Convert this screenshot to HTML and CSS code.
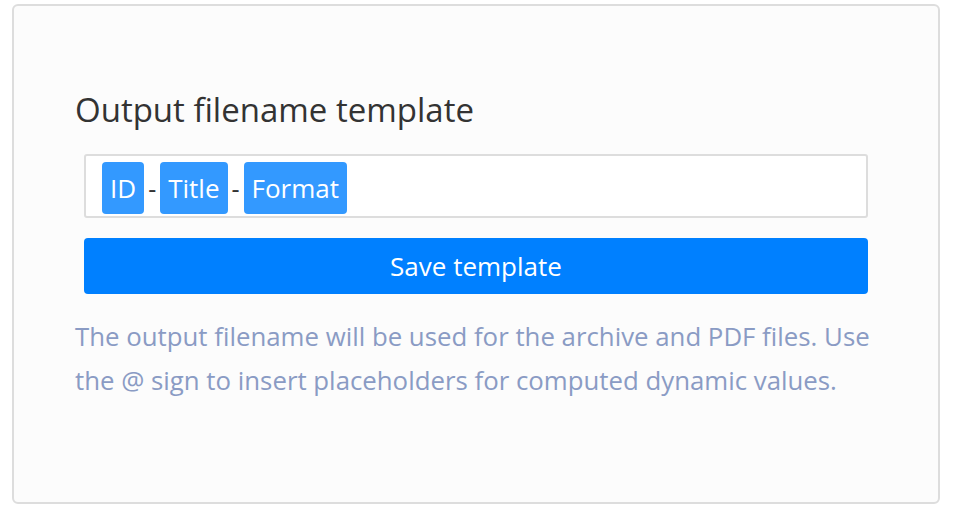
FILE: index.html
```html
<!DOCTYPE html>
<html lang="en">

<head>
    <meta charset="UTF-8">
    <meta name="viewport" content="width=device-width, initial-scale=1.0">
    <title>Output filename template</title>
    <link rel="stylesheet" href="styles.css">
</head>

<body>
    <div class="settings-card">
        <h2>Output filename template</h2>
        <div class="template-input">
            <span class="tag">ID</span>
            <span class="sep">-</span>
            <span class="tag">Title</span>
            <span class="sep">-</span>
            <span class="tag">Format</span>
        </div>
        <button class="save-btn">Save template</button>
        <p class="hint">The output filename will be used for the archive and PDF files. Use the @ sign to insert placeholders for computed dynamic values.</p>
    </div>
</body>

</html>
```

FILE: styles.css
```css
body {
    margin: 0;
    padding: 4px 14px 12px 12px;
    font-family: "Open Sans", Arial, sans-serif;
    background-color: #ffffff;
}

.settings-card {
    box-sizing: border-box;
    height: 500px;
    background-color: #fcfcfc;
    border: 2px solid #dddddd;
    border-radius: 6px;
    padding: 82px 50px 0 61px;
}

.settings-card h2 {
    margin: 0 0 22px 0;
    font-size: 33px;
    font-weight: 400;
    line-height: 44px;
    color: #333333;
}

/* input box holding the tags */
.template-input {
    box-sizing: border-box;
    height: 64px;
    width: 784px;
    margin-left: 9px;
    display: flex;
    align-items: center;
    gap: 4px;
    padding: 4px 16px 0 16px;
    background-color: #ffffff;
    border: 2px solid #dddddd;
    border-radius: 3px;
}

.tag {
    height: 52px;
    display: flex;
    align-items: center;
    padding: 0 8px;
    background-color: #3399ff;
    color: #ffffff;
    font-size: 26px;
    border-radius: 4px;
}

.sep {
    font-size: 25px;
    color: #333333;
}

.save-btn {
    display: block;
    width: 784px;
    height: 56px;
    margin: 20px 0 0 9px;
    background-color: #0080ff;
    color: #ffffff;
    border: none;
    border-radius: 4px;
    font-family: inherit;
    font-size: 26px;
    cursor: pointer;
}

.hint {
    margin: 20px 0 0 0;
    font-size: 25.8px;
    line-height: 44px;
    color: #8a9bc4;
}
```
